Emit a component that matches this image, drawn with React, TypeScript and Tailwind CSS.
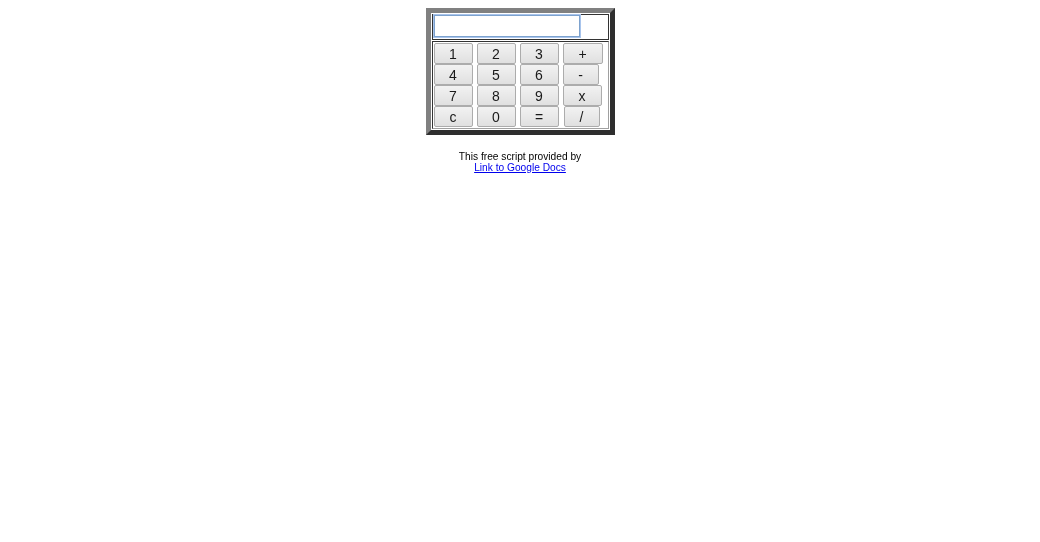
import React, { useState } from 'react';

const rows: { label: string; w: string; ml?: string }[][] = [
  [{ label: '1', w: 'w-[39px]' }, { label: '2', w: 'w-[39px]' }, { label: '3', w: 'w-[39px]' }, { label: '+', w: 'w-[40px]' }],
  [{ label: '4', w: 'w-[39px]' }, { label: '5', w: 'w-[39px]' }, { label: '6', w: 'w-[39px]' }, { label: '-', w: 'w-[36px]' }],
  [{ label: '7', w: 'w-[39px]' }, { label: '8', w: 'w-[39px]' }, { label: '9', w: 'w-[39px]' }, { label: 'x', w: 'w-[39px]' }],
  [{ label: 'c', w: 'w-[39px]' }, { label: '0', w: 'w-[39px]' }, { label: '=', w: 'w-[39px]' }, { label: '/', w: 'w-[36px]', ml: 'ml-[1px]' }],
];

const App: React.FC = () => {
  const [display, setDisplay] = useState('');

  const press = (k: string) => {
    if (k === 'c') return setDisplay('');
    if (k === '=') {
      try {
        // eslint-disable-next-line no-new-func
        const v = Function('return (' + display.replace(/x/g, '*') + ')')();
        setDisplay(String(v));
      } catch {
        setDisplay('');
      }
      return;
    }
    setDisplay(display + k);
  };

  return (
    <div className="min-h-[542px] bg-white pt-2 font-['Liberation_Sans',Arial,sans-serif] text-black">
      <div className="flex flex-col items-center">
        {/* calculator */}
        <div className="w-[189px] h-[127px] border-[5px] border-t-[#808080] border-l-[#808080] border-b-[#2e2e2e] border-r-[#2e2e2e] bg-white p-px flex flex-col gap-px">
          <div className="h-[26px] border border-[#333] flex items-start pl-px">
            <input
              autoFocus
              value={display}
              onChange={(e) => setDisplay(e.target.value)}
              className="w-[146px] h-[22px] border border-[#7da2ce] outline outline-1 outline-[#a8c4ec] px-1 text-[14px] bg-white"
            />
          </div>
          <div className="flex-1 border border-t-[#333] border-l-[#333] border-b-[#a0a0a0] border-r-[#a0a0a0] pt-px pl-px flex flex-col">
            {rows.map((row, i) => (
              <div key={i} className="flex h-[21px]">
                {row.map((b) => (
                  <div key={b.label} className="w-[43px] flex">
                    <button
                      onClick={() => press(b.label)}
                      className={`${b.w} ${b.ml ?? ''} h-[21px] border border-[#acacac] rounded-[2px] bg-gradient-to-b from-[#f2f2f2] to-[#e0e0e0] text-[14px] leading-none text-[#1a1a1a]`}
                    >
                      {b.label}
                    </button>
                  </div>
                ))}
              </div>
            ))}
          </div>
        </div>

        {/* footer */}
        <div className="mt-[16px] text-[10.2px] leading-[11px] text-center font-['Liberation_Sans',Arial,sans-serif]">
          <div>This free script provided by</div>
          <a href="#" className="text-[#0000ee] underline">Link to Google Docs</a>
        </div>
      </div>
    </div>
  );
};

export default App;
